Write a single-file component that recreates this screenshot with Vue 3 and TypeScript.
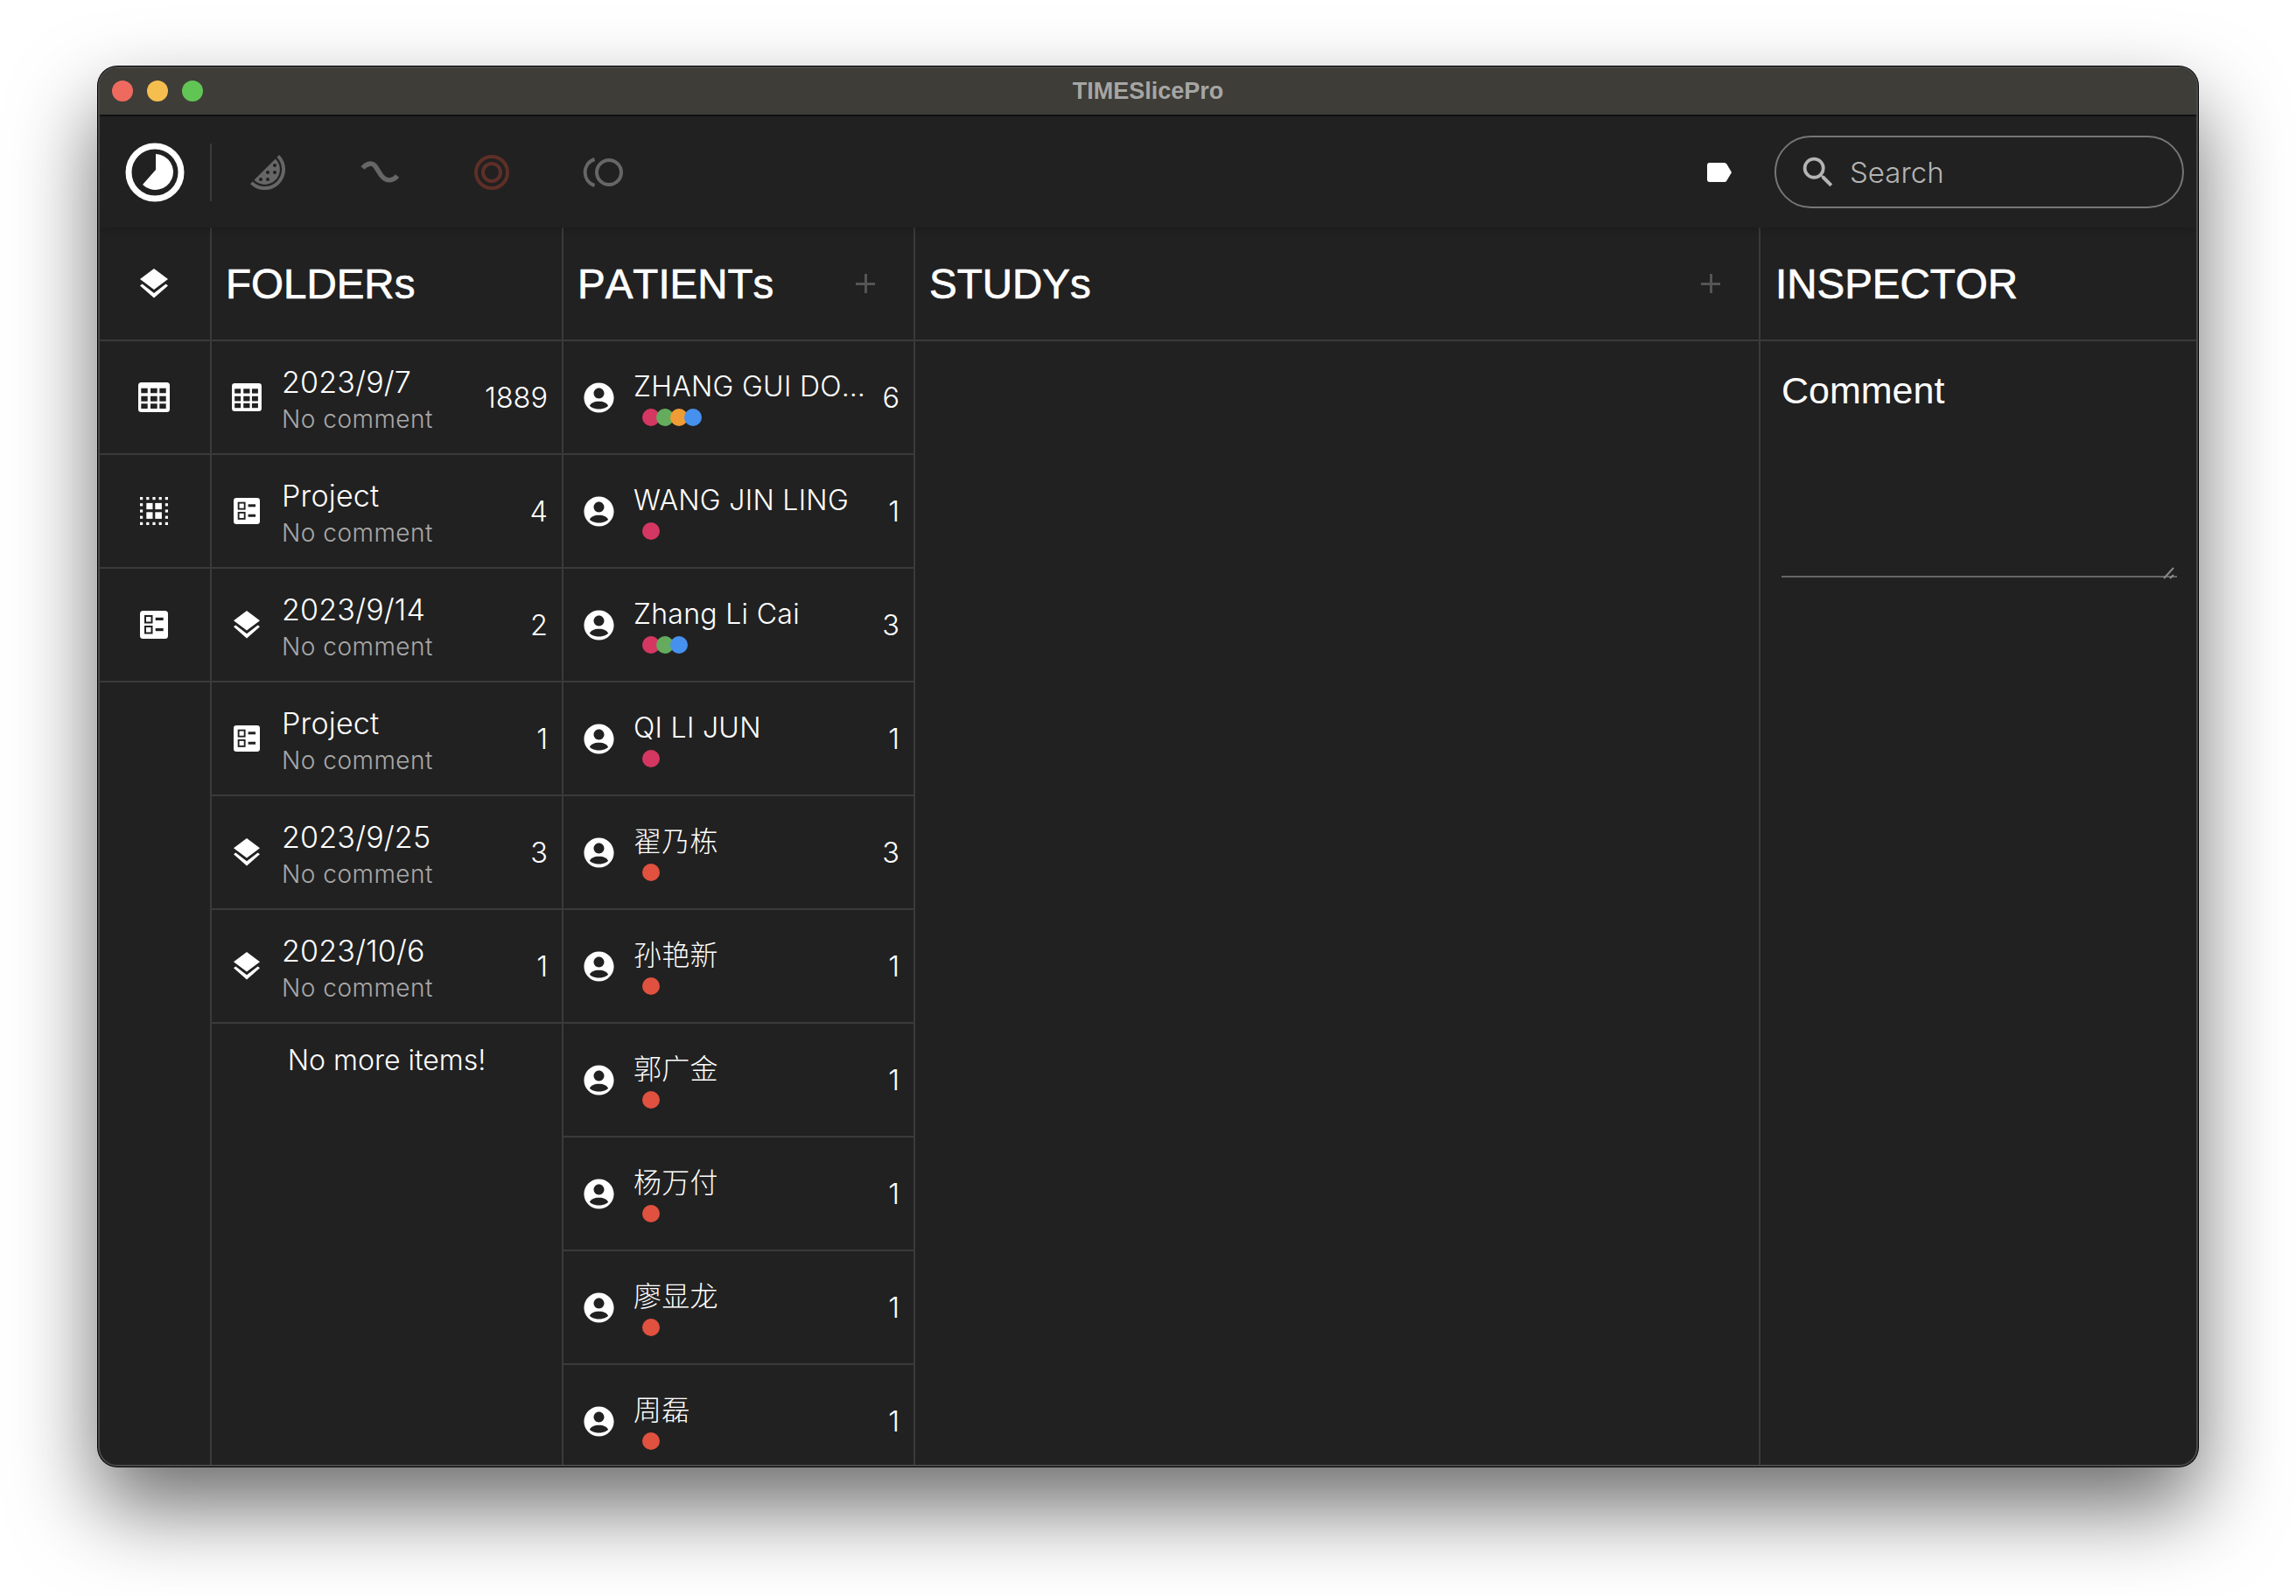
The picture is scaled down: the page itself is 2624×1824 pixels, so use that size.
<script setup lang="ts">
interface Folder { icon: string; name: string; count: string }
interface Patient { name: string; count: number; dots: string[] }

const pink = '#d43762'
const green = '#64ab5e'
const orange = '#ef9c35'
const blue = '#4690ee'
const red = '#e05140'

const folders: Folder[] = [
  { icon: 'table', name: '2023/9/7', count: '1889' },
  { icon: 'check', name: 'Project', count: '4' },
  { icon: 'layers', name: '2023/9/14', count: '2' },
  { icon: 'check', name: 'Project', count: '1' },
  { icon: 'layers', name: '2023/9/25', count: '3' },
  { icon: 'layers', name: '2023/10/6', count: '1' },
]

const patients: Patient[] = [
  { name: 'ZHANG GUI DONG LIANG', count: 6, dots: [pink, green, orange, blue] },
  { name: 'WANG JIN LING', count: 1, dots: [pink] },
  { name: 'Zhang Li Cai', count: 3, dots: [pink, green, blue] },
  { name: 'QI LI JUN', count: 1, dots: [pink] },
  { name: '翟乃栋', count: 3, dots: [red] },
  { name: '孙艳新', count: 1, dots: [red] },
  { name: '郭广金', count: 1, dots: [red] },
  { name: '杨万付', count: 1, dots: [red] },
  { name: '廖显龙', count: 1, dots: [red] },
  { name: '周磊', count: 1, dots: [red] },
]

const tableCells: number[][] = []
for (const y of [[6.7, 5.6], [15.7, 6], [24.3, 5.7]]) {
  for (const x of [[3.3, 7.4], [14, 7.7], [24.3, 7.4]]) {
    tableCells.push([x[0], y[0], x[1], y[1]])
  }
}

const perimeterDots: number[][] = []
for (let i = 0; i < 5; i++) {
  for (let j = 0; j < 5; j++) {
    if (i === 0 || j === 0 || i === 4 || j === 4) perimeterDots.push([i * 7.2, j * 7.2])
  }
}
</script>

<template>
  <div class="page">
    <div class="window">
      <div class="titlebar">
        <div class="lights">
          <span class="light l-red"></span>
          <span class="light l-yellow"></span>
          <span class="light l-green"></span>
        </div>
        <div class="title">TIMESlicePro</div>
      </div>

      <div class="toolbar">
        <div class="logo-cell">
          <svg width="68" height="68" viewBox="0 0 68 68">
            <circle cx="34" cy="34" r="30" fill="none" stroke="#fff" stroke-width="7" />
            <path d="M35 13 A20.5 20.5 0 1 1 20 48 L35 31 Z" fill="#fff" />
          </svg>
        </div>
        <div class="tools">
          <svg class="tool" width="48" height="48" viewBox="0 0 24 24" fill="#666">
            <path d="M16.4 16.4C19.8 13 19.8 7.5 16.4 4.2L4.2 16.4C7.5 19.8 13 19.8 16.4 16.4M16 7C16.6 7 17 7.4 17 8C17 8.6 16.6 9 16 9S15 8.6 15 8C15 7.4 15.4 7 16 7M16 11C16.6 11 17 11.4 17 12C17 12.6 16.6 13 16 13S15 12.6 15 12C15 11.4 15.4 11 16 11M12 11C12.6 11 13 11.4 13 12C13 12.6 12.6 13 12 13S11 12.6 11 12C11 11.4 11.4 11 12 11M12 15C12.6 15 13 15.4 13 16C13 16.6 12.6 17 12 17S11 16.6 11 16C11 15.4 11.4 15 12 15M8 17C7.4 17 7 16.6 7 16C7 15.4 7.4 15 8 15S9 15.4 9 16C9 16.6 8.6 17 8 17M18.6 18.6C14 23.2 6.6 23.2 2 18.6L3.4 17.2C7.2 21 13.3 21 17.2 17.2C21 13.4 21 7.3 17.2 3.4L18.6 2C23.2 6.6 23.2 14 18.6 18.6Z" />
          </svg>
          <svg class="tool" width="48" height="48" viewBox="0 0 48 48" fill="none" stroke="#666" stroke-width="5.500">
            <path d="M4.500 19 C8 15 14 12 18 16 C22 20 25 30 31 32 C36 34 41 32 44 28" />
          </svg>
          <svg class="tool" width="48" height="48" viewBox="0 0 48 48" fill="none" stroke="#5e2f27" stroke-width="4">
            <circle cx="24" cy="24" r="18" />
            <circle cx="24" cy="24" r="10" />
          </svg>
          <svg class="tool" width="48" height="48" viewBox="0 0 48 48" fill="none" stroke="#666" stroke-width="4">
            <circle cx="30" cy="24" r="14" />
            <path d="M13.500 9 C-1 14 -1 34 13.500 39" />
          </svg>
        </div>
        <svg class="label-icon" width="28" height="22" viewBox="0 0 30 22" preserveAspectRatio="none">
          <path d="M3 0 H21 Q23 0 24 1.500 L30 11 L24 20.500 Q23 22 21 22 H3 Q0 22 0 19 V3 Q0 0 3 0 Z" fill="#fff" />
        </svg>
        <div class="search">
          <svg width="46" height="46" viewBox="0 0 24 24" fill="#b4b4b4">
            <path d="M15.5 14h-.79l-.28-.27A6.47 6.47 0 0 0 16 9.5 6.5 6.5 0 1 0 9.5 16c1.61 0 3.09-.59 4.23-1.57l.27.28v.79l5 4.99L20.49 19l-4.99-5zm-6 0C7.01 14 5 11.99 5 9.5S7.01 5 9.5 5 14 7.01 14 9.5 11.99 14 9.5 14z" />
          </svg>
          <span class="search-text">Search</span>
        </div>
      </div>

      <div class="body">
        <div class="rail">
          <div class="rail-cell">
            <svg class="layers" width="32" height="34" viewBox="0 0 32 34"><use href="#ic-layers" /></svg>
          </div>
          <div class="rail-cell">
            <svg width="36" height="34" viewBox="0 0 36 34">
              <rect width="36" height="34" rx="3.5" fill="#fff" />
              <rect v-for="(c, i) in tableCells" :key="i" :x="c[0]" :y="c[1]" :width="c[2]" :height="c[3]" fill="#212121" />
            </svg>
          </div>
          <div class="rail-cell">
            <svg width="32" height="32" viewBox="0 0 32 32" fill="#fff">
              <rect v-for="(d, i) in perimeterDots" :key="i" :x="d[0]" :y="d[1]" width="3.2" height="3.2" />
              <rect x="7.3" y="6.9" width="7.2" height="7.2" />
              <rect x="17.3" y="6.9" width="7.6" height="7.2" />
              <rect x="7.3" y="17.3" width="7.2" height="7.6" />
              <rect x="17.3" y="17.3" width="7.6" height="7.6" />
            </svg>
          </div>
          <div class="rail-cell">
            <svg width="32" height="32" viewBox="0 0 32 32"><use href="#ic-check" /></svg>
          </div>
        </div>

        <div class="col col-folders">
          <div class="head"><span class="head-title">FOLDERs</span></div>
          <div v-for="(f, i) in folders" :key="i" class="row">
            <div class="row-icon">
              <svg v-if="f.icon === 'table'" width="34" height="32" viewBox="0 0 36 34">
                <rect width="36" height="34" rx="3.5" fill="#fff" />
                <rect v-for="(c, k) in tableCells" :key="k" :x="c[0]" :y="c[1]" :width="c[2]" :height="c[3]" fill="#212121" />
              </svg>
              <svg v-else-if="f.icon === 'check'" width="30" height="30" viewBox="0 0 32 32"><use href="#ic-check" /></svg>
              <svg v-else width="30" height="32" viewBox="0 0 32 34"><use href="#ic-layers" /></svg>
            </div>
            <div class="row-text">
              <div class="row-name">{{ f.name }}</div>
              <div class="row-sub">No comment</div>
            </div>
            <div class="row-count">{{ f.count }}</div>
          </div>
          <div class="no-more">No more items!</div>
        </div>

        <div class="col col-patients">
          <div class="head">
            <span class="head-title">PATIENTs</span>
            <span class="plus"></span>
          </div>
          <div v-for="(p, i) in patients" :key="i" class="row patient">
            <svg class="person" width="41" height="41" viewBox="0 0 24 24" fill="#fff">
              <path d="M12 2C6.48 2 2 6.48 2 12s4.48 10 10 10 10-4.48 10-10S17.52 2 12 2zm0 3.6c1.93 0 3.5 1.57 3.5 3.5S13.93 12.600 12 12.600 8.500 11.030 8.500 9.100 10.070 5.600 12 5.600zm0 8.900c3.200 0 5.500 1.200 6.200 2.900-1 1.200-3.400 2.200-6.200 2.200s-5.200-1-6.200-2.200c.7-1.700 3-2.900 6.200-2.900z" fill-rule="evenodd" />
            </svg>
            <div class="patient-text">
              <div class="patient-name">{{ p.name }}</div>
              <div class="dots">
                <span v-for="(d, k) in p.dots" :key="k" class="dot" :style="{ background: d }"></span>
              </div>
            </div>
            <div class="row-count">{{ p.count }}</div>
          </div>
        </div>

        <div class="col col-studies">
          <div class="head">
            <span class="head-title">STUDYs</span>
            <span class="plus"></span>
          </div>
        </div>

        <div class="col col-inspector">
          <div class="head"><span class="head-title head-inspector">INSPECTOR</span></div>
          <div class="inspector-body">
            <div class="comment">Comment</div>
            <div class="grip">
              <svg width="14" height="14" viewBox="0 0 14 14" fill="none" stroke="#8a8a8a" stroke-width="2">
                <path d="M1 13 L12 1 M8 13 L12 9" />
              </svg>
            </div>
          </div>
        </div>
      </div>
    </div>

    <svg width="0" height="0" class="defs">
      <defs>
        <g id="ic-layers" fill="#fff">
          <path d="M16 0 L32 12 L16 24 L0 12 Z" />
          <path d="M2.500 17.500 L16 28 L29.500 17.500 L32 19.500 L16 33.500 L0 19.500 Z" />
        </g>
        <g id="ic-check">
          <rect width="32" height="32" rx="3.500" fill="#fff" />
          <rect x="6" y="6" width="7.500" height="7.500" fill="none" stroke="#212121" stroke-width="2" />
          <rect x="6" y="18" width="7.500" height="7.500" fill="none" stroke="#212121" stroke-width="2" />
          <rect x="17.700" y="7.800" width="9" height="3.200" fill="#212121" />
          <rect x="17.700" y="20" width="9" height="3.200" fill="#212121" />
        </g>
      </defs>
    </svg>
  </div>
</template>

<style>
html, body { margin: 0; background: #fff; }
</style>

<style scoped>
.page {
  width: 2624px;
  height: 1824px;
  box-sizing: border-box;
  padding: 76px 0 0 112px;
  overflow: hidden;
  background: #fff;
  font-family: Inter, "Noto Sans CJK SC", sans-serif;
}
.defs { position: absolute; }
.window {
  width: 2400px;
  height: 1600px;
  box-sizing: border-box;
  border: 2px solid #4a4a4a;
  border-radius: 22px;
  background: #212121;
  overflow: hidden;
  display: flex;
  flex-direction: column;
  box-shadow: 0 0 0 1px #000, 0 46px 96px rgba(0, 0, 0, 0.58);
}
.titlebar {
  flex: none;
  height: 53px;
  background: #3e3d38;
  border-bottom: 2px solid #111;
  box-sizing: content-box;
  position: relative;
  display: flex;
  align-items: center;
  justify-content: center;
}
.lights {
  position: absolute;
  left: 14px;
  top: 14px;
  display: flex;
  gap: 16px;
}
.light { width: 24px; height: 24px; border-radius: 50%; }
.l-red { background: #ee6a5f; }
.l-yellow { background: #f5be4f; }
.l-green { background: #61c555; }
.title {
  font-family: "Liberation Sans", sans-serif;
  font-weight: 700;
  font-size: 27px;
  color: #a6a6a4;
}
.toolbar {
  flex: none;
  height: 127px;
  display: flex;
  align-items: center;
  background: #212121;
  box-shadow: 0 2px 8px rgba(0, 0, 0, 0.2);
  position: relative;
  z-index: 1;
}
.logo-cell {
  width: 126px;
  height: 66px;
  border-right: 2px solid #3a3a3a;
  display: flex;
  align-items: center;
  justify-content: center;
  flex: none;
}
.tools {
  display: flex;
  align-items: center;
  gap: 80px;
  padding-left: 40px;
  flex: 1;
}
.tool { flex: none; }
.label-icon { flex: none; margin-right: 49px; }
.search {
  flex: none;
  width: 468px;
  height: 83px;
  box-sizing: border-box;
  border: 2px solid #767676;
  border-radius: 42px;
  display: flex;
  align-items: center;
  padding-left: 25px;
  gap: 13px;
  margin-right: 14px;
}
.search-text {
  font-size: 33px;
  font-weight: 300;
  color: #b4b4b4;
}
.body {
  flex: 1;
  min-height: 0;
  display: flex;
}
.rail {
  flex: none;
  width: 126px;
  border-right: 2px solid #3a3a3a;
}
.rail-cell {
  height: 128px;
  box-sizing: content-box;
  border-bottom: 2px solid #3a3a3a;
  display: flex;
  align-items: center;
  justify-content: center;
  padding-right: 2px;
}
.col {
  flex: none;
  overflow: hidden;
  box-sizing: border-box;
  border-right: 2px solid #3a3a3a;
}
.col-folders { width: 402px; }
.col-patients { width: 402px; }
.col-studies { width: 966px; }
.col-inspector { width: 498px; border-right: none; }
.head {
  height: 128px;
  border-bottom: 2px solid #3a3a3a;
  display: flex;
  align-items: center;
  justify-content: space-between;
  padding: 0 24px 0 16px;
}
.head-title {
  font-family: "Liberation Sans", sans-serif;
  font-size: 47.500px;
  font-kerning: none;
  color: #fff;
  -webkit-text-stroke: 0.7px #fff;
}
.head-inspector { margin-left: 1px; }
.plus {
  width: 22px;
  height: 22px;
  margin-right: 20px;
  background:
    linear-gradient(#555, #555) center / 100% 3px no-repeat,
    linear-gradient(#555, #555) center / 3px 100% no-repeat;
}
.row {
  height: 128px;
  border-bottom: 2px solid #3a3a3a;
  display: flex;
  align-items: center;
  padding: 0 16px 0 0;
}
.row-icon {
  flex: none;
  width: 80px;
  display: flex;
  justify-content: center;
}
.row-text { flex: 1; min-width: 0; padding-top: 4px; }
.row-name {
  font-size: 34px;
  line-height: 46px;
  font-weight: 300;
  letter-spacing: 0.200px;
  color: #fff;
}
.row-sub {
  font-size: 28px;
  line-height: 38px;
  font-weight: 300;
  letter-spacing: 0.500px;
  color: #a8a8a8;
}
.row-count {
  flex: none;
  font-size: 32.500px;
  font-weight: 300;
  color: #fff;
}
.no-more {
  text-align: center;
  font-size: 32px;
  font-weight: 300;
  color: #fff;
  line-height: 84px;
}
.person { flex: none; margin: 0 19px 0 20px; }
.patient-text { flex: 1; min-width: 0; padding-right: 13px; }
.patient-name {
  font-size: 32px;
  line-height: 44px;
  font-weight: 300;
  letter-spacing: 0.300px;
  color: #fff;
  white-space: nowrap;
  overflow: hidden;
  text-overflow: ellipsis;
}
.dots {
  display: flex;
  padding-left: 10px;
  height: 20px;
  margin-top: 3px;
  margin-bottom: 2px;
}
.dot {
  width: 20px;
  height: 20px;
  border-radius: 50%;
  margin-right: -4px;
  flex: none;
}
.inspector-body {
  position: relative;
  margin: 0 22px 0 24px;
  height: 270px;
  border-bottom: 2px solid #666;
  box-sizing: border-box;
}
.comment {
  font-family: "Liberation Sans", sans-serif;
  font-size: 43px;
  line-height: 50px;
  padding-top: 31px;
  color: #fff;
}
.grip {
  position: absolute;
  right: 2px;
  bottom: -2px;
  height: 14px;
}
</style>
